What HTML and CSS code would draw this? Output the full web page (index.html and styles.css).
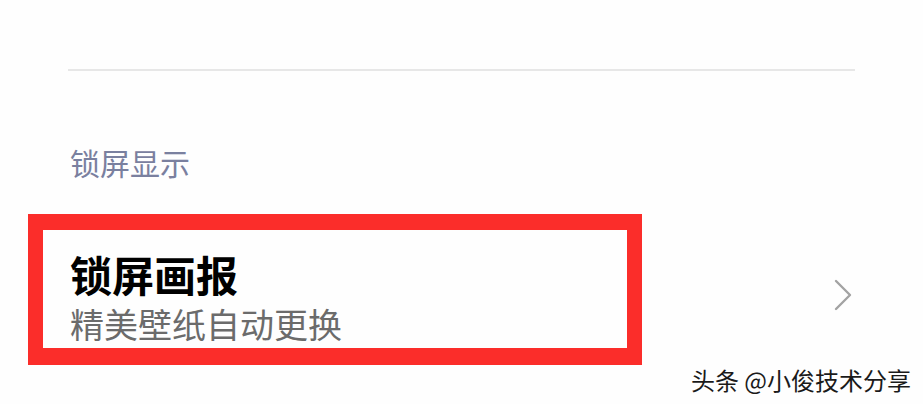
FILE: index.html
```html
<!DOCTYPE html>
<html lang="zh">
<head>
<meta charset="utf-8">
<link rel="stylesheet" href="styles.css">
</head>
<body>
<div class="page">
  <div class="top-space"></div>
  <div class="divider"></div>
  <div class="section-title">锁屏显示</div>
  <div class="row">
    <div class="row-text">
      <div class="row-title">锁屏画报</div>
      <div class="row-sub">精美壁纸自动更换</div>
    </div>
    <svg class="chevron" width="20" height="32" viewBox="0 0 20 32">
      <path d="M3 2 L17 16 L3 30" fill="none" stroke="#a3a3a3" stroke-width="2.4" stroke-linecap="round" stroke-linejoin="round"/>
    </svg>
  </div>
  <div class="highlight"></div>
  <div class="watermark">头条 @小俊技术分享</div>
</div>
</body>
</html>
```
FILE: styles.css
```css
html, body {
  margin: 0;
  padding: 0;
  background: #fefefe;
}
.page {
  position: relative;
  width: 923px;
  height: 404px;
  overflow: hidden;
  padding: 0 68px;
  box-sizing: border-box;
  font-family: "Noto Sans CJK SC", "Noto Sans", sans-serif;
}
.top-space {
  height: 69px;
}
.divider {
  height: 2px;
  background: #e7e7e7;
}
.section-title {
  margin-top: 73px;
  padding-left: 2px;
  font-size: 30px;
  line-height: 36px;
  color: #7a809f;
}
.row {
  display: flex;
  align-items: center;
  justify-content: space-between;
  margin-top: 64px;
}
.row-text {
  padding-left: 2px;
}
.row-title {
  font-size: 42px;
  line-height: 60px;
  font-weight: 700;
  color: #000;
}
.row-sub {
  font-size: 34px;
  line-height: 40px;
  color: #6b6b6b;
}
.chevron {
  margin-right: 2px;
  margin-top: 2px;
}
.highlight {
  position: absolute;
  left: 28px;
  top: 214px;
  width: 584px;
  height: 118px;
  border-style: solid;
  border-color: #fb2d2a;
  border-width: 16px 15px 17px 15px;
}
.watermark {
  position: absolute;
  right: 12px;
  bottom: 10px;
  font-size: 24px;
  line-height: 28px;
  color: #1a1a1a;
  text-shadow: 1px 1px 0 #fff, -1px -1px 0 #fff, 1px -1px 0 #fff, -1px 1px 0 #fff;
}
```
